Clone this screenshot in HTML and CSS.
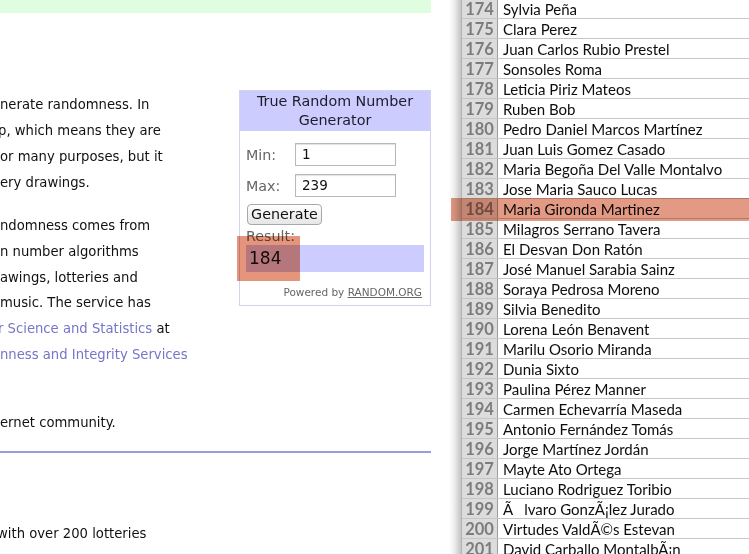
FILE: index.html
```html
<!DOCTYPE html>
<html>
<head>
<meta charset="utf-8">
<title>Random draw</title>
<link rel="stylesheet" href="styles.css">
</head>
<body>
<div class="page">
  <div class="left">
    <div class="greenbar"></div>
    <div class="intro">
      <div class="text">
        <div class="para p1">
          <div class="ln">nerate randomness. In</div>
          <div class="ln"><span class="cut2">p</span>, which means they are</div>
          <div class="ln">or many purposes, but it</div>
          <div class="ln">ery drawings.</div>
        </div>
        <div class="para p2">
          <div class="ln">ndomness comes from</div>
          <div class="ln">n number algorithms</div>
          <div class="ln">awings, lotteries and</div>
          <div class="ln">music. The service has</div>
          <div class="ln"><a class="lnk" href="#"><span class="cut2">r</span> Science and Statistics</a> at</div>
          <div class="ln"><a class="lnk" href="#">nness and Integrity Services</a></div>
        </div>
        <div class="para p3">
          <div class="ln">ernet community.</div>
        </div>
      </div>
      <div class="widget">
        <div class="wtitle">True Random Number<br>Generator</div>
        <div class="wbody">
          <div class="frow first"><span class="flabel">Min:</span><span class="finput">1</span></div>
          <div class="frow"><span class="flabel">Max:</span><span class="finput">239</span></div>
          <div class="btnrow"><span class="btn">Generate</span></div>
          <div class="rlabel">Result:</div>
          <div class="rbar">184</div>
          <div class="powered">Powered by <span class="ul">RANDOM.ORG</span></div>
        </div>
        <div class="mark"></div>
      </div>
    </div>
    <div class="rule"></div>
    <div class="para p4">
      <div class="ln"><span class="cut3">w</span>ith over 200 lotteries</div>
    </div>
  </div>
  <div class="gap"></div>
  <div class="shadow"></div>
  <div class="sheet">
    <div class="row"><span class="num">174</span><span class="name">Sylvia Peña</span></div>
    <div class="row"><span class="num">175</span><span class="name">Clara Perez</span></div>
    <div class="row"><span class="num">176</span><span class="name">Juan Carlos Rubio Prestel</span></div>
    <div class="row"><span class="num">177</span><span class="name">Sonsoles Roma</span></div>
    <div class="row"><span class="num">178</span><span class="name">Leticia Piriz Mateos</span></div>
    <div class="row"><span class="num">179</span><span class="name">Ruben Bob</span></div>
    <div class="row"><span class="num">180</span><span class="name">Pedro Daniel Marcos Martínez</span></div>
    <div class="row"><span class="num">181</span><span class="name">Juan Luis Gomez Casado</span></div>
    <div class="row"><span class="num">182</span><span class="name">Maria Begoña Del Valle Montalvo</span></div>
    <div class="row"><span class="num">183</span><span class="name">Jose Maria Sauco Lucas</span></div>
    <div class="row"><span class="num">184</span><span class="name">Maria Gironda Martinez</span></div>
    <div class="row"><span class="num">185</span><span class="name">Milagros Serrano Tavera</span></div>
    <div class="row"><span class="num">186</span><span class="name">El Desvan Don Ratón</span></div>
    <div class="row"><span class="num">187</span><span class="name">José Manuel Sarabia Sainz</span></div>
    <div class="row"><span class="num">188</span><span class="name">Soraya Pedrosa Moreno</span></div>
    <div class="row"><span class="num">189</span><span class="name">Silvia Benedito</span></div>
    <div class="row"><span class="num">190</span><span class="name">Lorena León Benavent</span></div>
    <div class="row"><span class="num">191</span><span class="name">Marilu Osorio Miranda</span></div>
    <div class="row"><span class="num">192</span><span class="name">Dunia Sixto</span></div>
    <div class="row"><span class="num">193</span><span class="name">Paulina Pérez Manner</span></div>
    <div class="row"><span class="num">194</span><span class="name">Carmen Echevarría Maseda</span></div>
    <div class="row"><span class="num">195</span><span class="name">Antonio Fernández Tomás</span></div>
    <div class="row"><span class="num">196</span><span class="name">Jorge Martínez Jordán</span></div>
    <div class="row"><span class="num">197</span><span class="name">Mayte Ato Ortega</span></div>
    <div class="row"><span class="num">198</span><span class="name">Luciano Rodriguez Toribio</span></div>
    <div class="row"><span class="num">199</span><span class="name">Ã<span class="blank"></span>lvaro GonzÃ¡lez Jurado</span></div>
    <div class="row"><span class="num">200</span><span class="name">Virtudes ValdÃ©s Estevan</span></div>
    <div class="row"><span class="num">201</span><span class="name">David Carballo MontalbÃ¡n</span></div>
    <div class="rowmark"></div>
  </div>
</div>
</body>
</html>
```

FILE: styles.css
```css
html, body {
  margin: 0;
  padding: 0;
  background: #ffffff;
}
.page {
  width: 749px;
  height: 554px;
  overflow: hidden;
  display: flex;
  position: relative;
}
.left {
  width: 431px;
  flex: none;
  overflow: hidden;
  font-family: "DejaVu Sans", Verdana, sans-serif;
  font-size: 13.2px;
  color: #111111;
}
.greenbar {
  height: 13px;
  background: #dffedf;
}
.intro {
  display: flex;
  align-items: flex-start;
}
.text {
  width: 239px;
  flex: none;
  padding-top: 79px;
}
.para .ln {
  height: 26px;
  line-height: 26px;
  white-space: nowrap;
}
.p2 .ln {
  height: 25.8px;
  line-height: 25.8px;
}
.p1 { margin-bottom: 17px; }
.p3 { margin-top: 42px; }
.cut2 { margin-left: -2px; }
.cut3 { margin-left: -3px; }
.lnk {
  color: #7575c9;
  text-decoration: none;
}
.widget {
  width: 190px;
  margin-top: 77px;
  border: 1px solid #d2d2f2;
  position: relative;
  flex: none;
}
.wtitle {
  background: #ccccff;
  text-align: center;
  font-size: 14.3px;
  line-height: 19px;
  padding: 1px 0 1px;
  color: #1c1c2a;
}
.wbody {
  padding: 0 6px 6px 6px;
  font-size: 14.3px;
}
.frow {
  display: flex;
  align-items: center;
  margin-top: 8px;
}
.frow.first { margin-top: 12px; }
.flabel {
  width: 49px;
  color: #666666;
}
.finput {
  width: 93px;
  height: 21px;
  line-height: 21px;
  padding-left: 6px;
  border: 1px solid #b8b8b8;
  box-shadow: inset 0 1px 1px rgba(0,0,0,0.12);
  font-size: 13.5px;
  color: #111;
}
.btnrow {
  margin-top: 7px;
  padding-left: 1px;
}
.btn {
  display: inline-block;
  width: 73px;
  height: 19px;
  line-height: 19px;
  text-align: center;
  border: 1px solid #a8a8a8;
  border-radius: 4px;
  background: linear-gradient(#ffffff, #e6e6e6);
  font-size: 14.3px;
  color: #111;
}
.rlabel {
  margin-top: 3px;
  height: 17px;
  line-height: 17px;
  color: #666666;
}
.rbar {
  width: 175px;
  height: 27px;
  line-height: 27px;
  padding-left: 3px;
  background: #ccccff;
  font-size: 17px;
  color: #111;
}
.powered {
  margin-top: 13px;
  line-height: 14px;
  font-size: 10.5px;
  color: #666666;
  text-align: right;
  padding-right: 2px;
}
.ul { text-decoration: underline; }
.mark {
  position: absolute;
  left: -3px;
  top: 145px;
  width: 63px;
  height: 45px;
  background: #e4957c;
  mix-blend-mode: multiply;
}
.rule {
  height: 2px;
  background: #9c9cdb;
  margin-top: 15px;
}
.p4 { margin-top: 68px; }
.gap {
  width: 18px;
  flex: none;
}
.shadow {
  width: 12px;
  flex: none;
  background: linear-gradient(to right, #ffffff, #f0f0f0 40%, #c4c4c4);
}
.sheet {
  flex: 1;
  margin-top: -1px;
  border-left: 1px solid #b4b4b4;
  position: relative;
}
.row {
  display: flex;
  height: 19px;
  border-bottom: 1px solid #c6c6c6;
  line-height: 20px;
}
.num {
  width: 35px;
  flex: none;
  background: #dcdcdc;
  border-right: 1px solid #9e9e9e;
  text-align: center;
  font-family: Lato, "Liberation Sans", sans-serif;
  font-weight: 700;
  font-size: 16.5px;
  color: #7c7c7c;
}
.name {
  padding-left: 5px;
  font-family: Lato, "Liberation Sans", sans-serif;
  font-size: 15px;
  color: #0d0d0d;
  white-space: nowrap;
}
.blank {
  display: inline-block;
  width: 11px;
}
.rowmark {
  position: absolute;
  left: -11px;
  right: 0;
  top: 199px;
  height: 23px;
  background: #e39a84;
  mix-blend-mode: multiply;
}
```
